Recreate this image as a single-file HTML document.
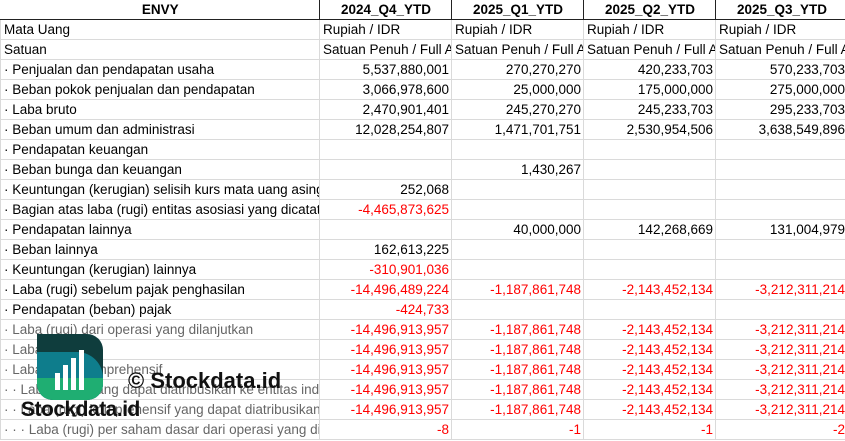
<!DOCTYPE html>
<html><head><meta charset="utf-8"><style>
body{margin:0;width:845px;height:441px;overflow:hidden;background:#fff;font-family:"Liberation Sans",sans-serif;font-size:13.5px;color:#000;position:relative}
table{border-collapse:collapse;table-layout:fixed;position:absolute;left:0;top:0;width:847px}
td{height:19px;padding:0 2px 0 3px;border:1px solid #dadada;white-space:nowrap;overflow:hidden;line-height:19px;text-overflow:clip}
tr.h td{font-weight:bold;text-align:center;border:1px solid #222;border-top:none}
td.n{text-align:right}
.r{color:#f00}
.wm{position:absolute}
</style></head><body>
<table>
<colgroup><col style="width:319px"><col style="width:132px"><col style="width:132px"><col style="width:132px"><col style="width:132px"></colgroup>
<tr class="h"><td style="border-left:none">ENVY</td><td>2024_Q4_YTD</td><td>2025_Q1_YTD</td><td>2025_Q2_YTD</td><td>2025_Q3_YTD</td></tr>
<tr><td>Mata Uang</td><td>Rupiah / IDR</td><td>Rupiah / IDR</td><td>Rupiah / IDR</td><td>Rupiah / IDR</td></tr>
<tr><td>Satuan</td><td>Satuan Penuh / Full Amount</td><td>Satuan Penuh / Full Amount</td><td>Satuan Penuh / Full Amount</td><td>Satuan Penuh / Full Amount</td></tr>
<tr><td>· Penjualan dan pendapatan usaha</td><td class="n">5,537,880,001</td><td class="n">270,270,270</td><td class="n">420,233,703</td><td class="n">570,233,703</td></tr>
<tr><td>· Beban pokok penjualan dan pendapatan</td><td class="n">3,066,978,600</td><td class="n">25,000,000</td><td class="n">175,000,000</td><td class="n">275,000,000</td></tr>
<tr><td>· Laba bruto</td><td class="n">2,470,901,401</td><td class="n">245,270,270</td><td class="n">245,233,703</td><td class="n">295,233,703</td></tr>
<tr><td>· Beban umum dan administrasi</td><td class="n">12,028,254,807</td><td class="n">1,471,701,751</td><td class="n">2,530,954,506</td><td class="n">3,638,549,896</td></tr>
<tr><td>· Pendapatan keuangan</td><td></td><td></td><td></td><td></td></tr>
<tr><td>· Beban bunga dan keuangan</td><td></td><td class="n">1,430,267</td><td></td><td></td></tr>
<tr><td>· Keuntungan (kerugian) selisih kurs mata uang asing</td><td class="n">252,068</td><td></td><td></td><td></td></tr>
<tr><td>· Bagian atas laba (rugi) entitas asosiasi yang dicatat</td><td class="n r">-4,465,873,625</td><td></td><td></td><td></td></tr>
<tr><td>· Pendapatan lainnya</td><td></td><td class="n">40,000,000</td><td class="n">142,268,669</td><td class="n">131,004,979</td></tr>
<tr><td>· Beban lainnya</td><td class="n">162,613,225</td><td></td><td></td><td></td></tr>
<tr><td>· Keuntungan (kerugian) lainnya</td><td class="n r">-310,901,036</td><td></td><td></td><td></td></tr>
<tr><td>· Laba (rugi) sebelum pajak penghasilan</td><td class="n r">-14,496,489,224</td><td class="n r">-1,187,861,748</td><td class="n r">-2,143,452,134</td><td class="n r">-3,212,311,214</td></tr>
<tr><td>· Pendapatan (beban) pajak</td><td class="n r">-424,733</td><td></td><td></td><td></td></tr>
<tr><td style="color:#666">· Laba (rugi) dari operasi yang dilanjutkan</td><td class="n r">-14,496,913,957</td><td class="n r">-1,187,861,748</td><td class="n r">-2,143,452,134</td><td class="n r">-3,212,311,214</td></tr>
<tr><td style="color:#666">· Laba (rugi)</td><td class="n r">-14,496,913,957</td><td class="n r">-1,187,861,748</td><td class="n r">-2,143,452,134</td><td class="n r">-3,212,311,214</td></tr>
<tr><td style="color:#666">· Laba (rugi) komprehensif</td><td class="n r">-14,496,913,957</td><td class="n r">-1,187,861,748</td><td class="n r">-2,143,452,134</td><td class="n r">-3,212,311,214</td></tr>
<tr><td style="color:#666">· · Laba (rugi) yang dapat diatribusikan ke entitas induk</td><td class="n r">-14,496,913,957</td><td class="n r">-1,187,861,748</td><td class="n r">-2,143,452,134</td><td class="n r">-3,212,311,214</td></tr>
<tr><td style="color:#666">· · Laba (rugi) komprehensif yang dapat diatribusikan</td><td class="n r">-14,496,913,957</td><td class="n r">-1,187,861,748</td><td class="n r">-2,143,452,134</td><td class="n r">-3,212,311,214</td></tr>
<tr><td style="color:#666">· · · Laba (rugi) per saham dasar dari operasi yang dilanjutkan</td><td class="n r">-8</td><td class="n r">-1</td><td class="n r">-1</td><td class="n r">-2</td></tr>
</table>
<svg class="wm" style="left:37px;top:334px" width="66" height="66" viewBox="0 0 66 66">
<defs><clipPath id="c"><path d="M0 0H50A16 16 0 0 1 66 16V50A16 16 0 0 1 50 66H16A16 16 0 0 1 0 50Z"/></clipPath></defs>
<g clip-path="url(#c)">
<rect width="66" height="66" fill="#0f3d3d"/>
<path d="M0 18H40A26 26 0 0 1 66 44V66H0Z" fill="#0e7d8c"/>
<rect y="44" width="66" height="22" fill="#1fae72"/>
<rect x="18" y="39" width="5" height="17" fill="#fff"/>
<rect x="26" y="31" width="5" height="25" fill="#fff"/>
<rect x="34" y="24" width="5" height="32" fill="#fff"/>
<rect x="42" y="16" width="5" height="40" fill="#fff"/>
</g></svg>
<div class="wm" style="left:21px;top:398px;font-weight:bold;font-size:21px;color:#111;letter-spacing:-0.5px">Stockdata.id</div>
<div class="wm" style="left:128px;top:368px;font-weight:bold;font-size:22px;color:#111">© Stockdata.id</div>
</body></html>
